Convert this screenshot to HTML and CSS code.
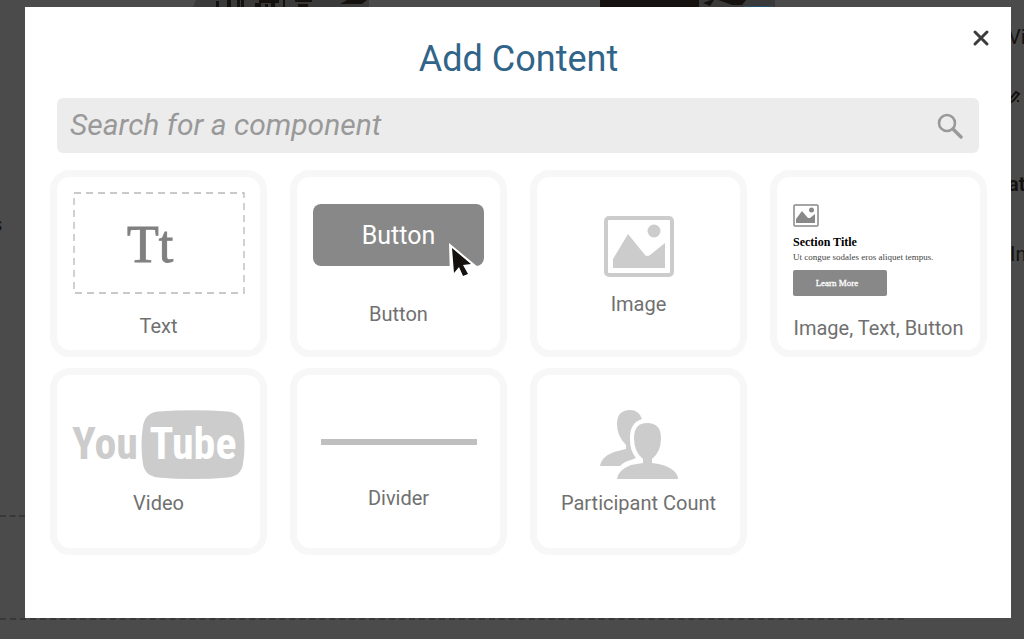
FILE: index.html
```html
<!DOCTYPE html>
<html lang="en">
<head>
<meta charset="utf-8">
<title>Add Content</title>
<link rel="stylesheet" href="styles.css">
</head>
<body>
<div class="page" aria-hidden="true">
  <div class="page-left">s</div>
  <svg class="photos" viewBox="0 0 720 7" width="720" height="7">
    <path fill="#3a3a3a" d="M43 7l3-7h173v7zM450 0h175v7H450z"/>
    <path fill="#15110f" d="M66 1h3v6h-3zM77 0h4v7h-4zM87 0h3v7h-3zM91 0h3v7h-3zM105 3h6v4h-6zM109 0h20v3h-20zM115 4h3v3h-3zM121 2h4v5h-4zM133 0h2v7h-2zM145 0h17v2h-17zM148 4h10v3h-10zM190 4l7-4h20l-5 4h-21zM450 0h99v7h-99zM553 3l8-3h3l-4 6zM568 0h28l-4 5h-10l-8-3z"/>
    <path fill="#24506b" d="M594 6h29v1h-29z"/>
  </svg>
  <div class="page-right">
    <span>Vi</span>
    <svg class="pencil" viewBox="0 0 14 14" width="14" height="14"><path d="M1 13l1-4 6-7 3 2-6 7zM9 11h2" fill="none" stroke="#15110f" stroke-width="2"/></svg>
    <b>at</b>
    <span>In</span>
  </div>
  <div class="dash dash-a"></div>
  <div class="dash dash-b"></div>
</div>

<div class="overlay">
  <main class="modal" role="dialog" aria-labelledby="title">
    <button class="close" type="button" aria-label="Close">
      <svg viewBox="0 0 18 18" width="18" height="18"><path d="M3 3l12 12M15 3L3 15" stroke="#3c3c3c" stroke-width="3" stroke-linecap="round"/></svg>
    </button>
    <h1 class="title" id="title">Add Content</h1>
    <form class="search">
      <input class="search-input" type="text" aria-label="Search for a component" placeholder="Search for a component">
      <svg class="search-icon" viewBox="0 0 26 26" width="26" height="26" fill="none" stroke="#999"><circle cx="10" cy="10" r="8" stroke-width="2.6"/><path d="M16 16l8 8" stroke-width="3.4" stroke-linecap="round"/></svg>
    </form>
    <div class="grid">
      <button class="card card-text" type="button">
        <span class="art text-art">
          <svg class="text-frame" viewBox="0 0 172 102" width="172" height="102"><rect x="1" y="1" width="170" height="100" fill="none" stroke="#b8b8b8" stroke-width="1.3" stroke-dasharray="7 5"/></svg>
          <span class="tt">Tt</span>
        </span>
        <span class="label">Text</span>
      </button>
      <button class="card card-button" type="button">
        <span class="art button-art">Button
          <svg class="cursor" viewBox="0 0 32 34" width="32" height="34"><path fill="#fff" d="M1 0l29 24h-10l5 10H2z"/><path fill="#15110f" d="M4 5l19 16-8 1 5 9-5 2-4-9-5 6z"/></svg>
        </span>
        <span class="label">Button</span>
      </button>
      <button class="card card-image" type="button">
        <svg class="art" viewBox="0 0 70 61" width="70" height="61"><rect x="2" y="2" width="66" height="57" rx="3" fill="none" stroke="#ccc" stroke-width="4"/><circle cx="50" cy="15" r="6.5" fill="#ccc"/><path fill="#ccc" d="M9 52v-9l15-25 17 21q2 2 5 0l15-12v25z"/></svg>
        <span class="label">Image</span>
      </button>
      <button class="card card-combo" type="button">
        <span class="art combo-art">
          <svg viewBox="0 0 26 23" width="26" height="23"><rect x="1" y="1" width="24" height="21" rx="1" fill="none" stroke="#888" stroke-width="1.5"/><circle cx="18.500" cy="6" r="2.5" fill="#888"/><path fill="#888" d="M3 19v-4l6-8 6 7h2l5-4v9z"/></svg>
          <span class="combo-title">Section Title</span>
          <span class="combo-text">Ut congue sodales eros aliquet tempus.</span>
          <span class="combo-button">Learn More</span>
        </span>
        <span class="label">Image, Text, Button</span>
      </button>
      <button class="card card-video" type="button">
        <span class="art video-art"><span class="you">You</span>
          <span class="tube"><svg class="tube-shape" viewBox="0 0 104 69" width="104" height="69"><path fill="#ccc" d="M17 1.500Q52-1 87 1.500 100 3 102 16q3 19 0 38-2 12-15 13.500-35 3-70 0Q4 66 2 54-1 35 2 16 4 3 17 1.500z"/></svg><span class="tube-text">Tube</span></span>
        </span>
        <span class="label">Video</span>
      </button>
      <button class="card card-divider" type="button">
        <span class="art divider-art"></span>
        <span class="label">Divider</span>
      </button>
      <button class="card card-people" type="button">
        <svg class="art" viewBox="0 0 78 69" width="78" height="69"><path fill="#ccc" d="M30 0q9 0 12 9-13 4-12 21 0 11 6 18l-5 2q-6 1-11 6H0q1-9 14-14l12-3v-4q-9-9-9-21Q17 0 30 0z"/><path fill="#ccc" d="M47 13q14 0 14 15 0 14-9 21v4q14 1 22 8 4 4 4 8H17q1-9 14-14l12-2v-4q-9-7-9-21 0-15 13-15z"/></svg>
        <span class="label">Participant Count</span>
      </button>
    </div>
  </main>
</div>
</body>
</html>
```
FILE: styles.css
```css
* { box-sizing: border-box; }
body {
  margin: 0;
  min-height: 100vh;
  background: #4b4b4b;
  font-family: Roboto, "Liberation Sans", sans-serif;
  color: #707070;
}
button { font: inherit; color: inherit; cursor: pointer; }
svg { display: block; flex: none; }

.page {
  position: absolute;
  inset: 0;
  overflow: hidden;
  color: #15110f;
  font-size: 20px;
  line-height: 24px;
}
.page-left { position: absolute; top: 212px; left: -8px; }
.photos { position: absolute; top: 0; left: 150px; }
.page-right {
  position: absolute;
  top: 25px;
  left: calc(100% - 16px);
  display: flex;
  flex-direction: column;
}
.pencil { margin: 41px 0 68px; }
.page-right b { margin-bottom: 46px; }
.page-right span:last-child { padding-left: 2px; }
.dash { position: absolute; left: 0; border-top: 2px dashed #383838; }
.dash-a { top: 515px; width: 25px; }
.dash-b { top: 618px; width: 904px; }

.overlay {
  position: relative;
  display: flex;
  min-height: 100vh;
  padding: 7px 13px 21px 25px;
}
.modal {
  position: relative;
  flex: 1;
  padding: 30px 24px 63px 25px;
  background: #fff;
}
.close {
  position: absolute;
  top: 22px;
  right: 21px;
  padding: 0;
  border: 0;
  background: none;
}
.title {
  margin: 0 0 17px;
  font-size: 36px;
  line-height: 44px;
  font-weight: 400;
  text-align: center;
  color: #306488;
}
.search {
  display: flex;
  align-items: center;
  height: 55px;
  margin: 0 8px 17px 7px;
  padding: 0 16px 0 13px;
  border-radius: 6px;
  background: #ececec;
}
.search-input {
  flex: 1;
  min-width: 0;
  height: 52px;
  padding: 0 0 3px;
  border: 0;
  outline: 0;
  background: none;
  font: italic 30px Roboto, "Liberation Sans", sans-serif;
  color: #707070;
}
.search-input::placeholder { color: #999; opacity: 1; }

.grid {
  display: grid;
  grid-template-columns: repeat(4, minmax(0, 1fr));
  gap: 11px 23px;
}
.card {
  display: flex;
  flex-direction: column;
  align-items: center;
  justify-content: flex-start;
  min-height: 187px;
  padding: 0 15px;
  border: 7px solid #f7f7f7;
  border-radius: 20px;
  background: #fff;
}
.label { font-size: 20px; line-height: 24px; white-space: nowrap; }

.card-text { padding-top: 15px; }
.text-art { position: relative; display: grid; place-items: center; width: 172px; height: 102px; margin-bottom: 20px; }
.text-frame { position: absolute; inset: 0; }
.tt {
  padding: 3px 17px 0 0;
  font: 52px/60px "Liberation Serif", serif;
  color: #808080;
  -webkit-text-stroke: 1px #808080;
}

.card-button { padding-top: 27px; }
.button-art {
  position: relative;
  width: 171px;
  padding-top: 2px;
  margin-bottom: 36px;
  border-radius: 8px;
  background: #888;
  color: #fff;
  font-size: 25px;
  line-height: 60px;
}
.cursor { position: absolute; right: 4px; top: 39px; }

.card-image { padding-top: 39px; }
.card-image .art { margin-bottom: 15px; }

.card-combo { padding-top: 27px; }
.combo-art {
  display: flex;
  flex-direction: column;
  align-items: flex-start;
  width: 100%;
  padding-left: 1px;
  margin-bottom: 20px;
  font-family: "Liberation Serif", serif;
  white-space: nowrap;
}
.combo-title { margin-top: 8px; font-size: 12px; line-height: 14px; font-weight: 700; color: #000; }
.combo-text { margin: 2px 0 7px; font-size: 9px; line-height: 12px; color: #444; }
.combo-button { width: 94px; padding-right: 6px; border-radius: 2px; background: #888; color: #fff; font-size: 9px; line-height: 26px; text-align: center; -webkit-text-stroke: 0.3px #fff; }

.card-video { padding-top: 35px; }
.video-art {
  display: flex;
  align-items: center;
  justify-content: space-between;
  width: 173px;
  margin-bottom: 12px;
  font: 700 44px/69px "Liberation Sans Narrow", "Roboto Condensed", "DejaVu Sans Condensed", sans-serif;
  color: #ccc;
}
.tube { position: relative; width: 104px; height: 69px; }
.tube-text { position: absolute; inset: 0; color: #fff; }

.card-divider { padding-top: 64px; }
.divider-art { width: 156px; height: 6px; margin-bottom: 41px; background: #bfbfbf; }

.card-people { padding-top: 35px; }
.card-people .art { margin-bottom: 12px; }
```
